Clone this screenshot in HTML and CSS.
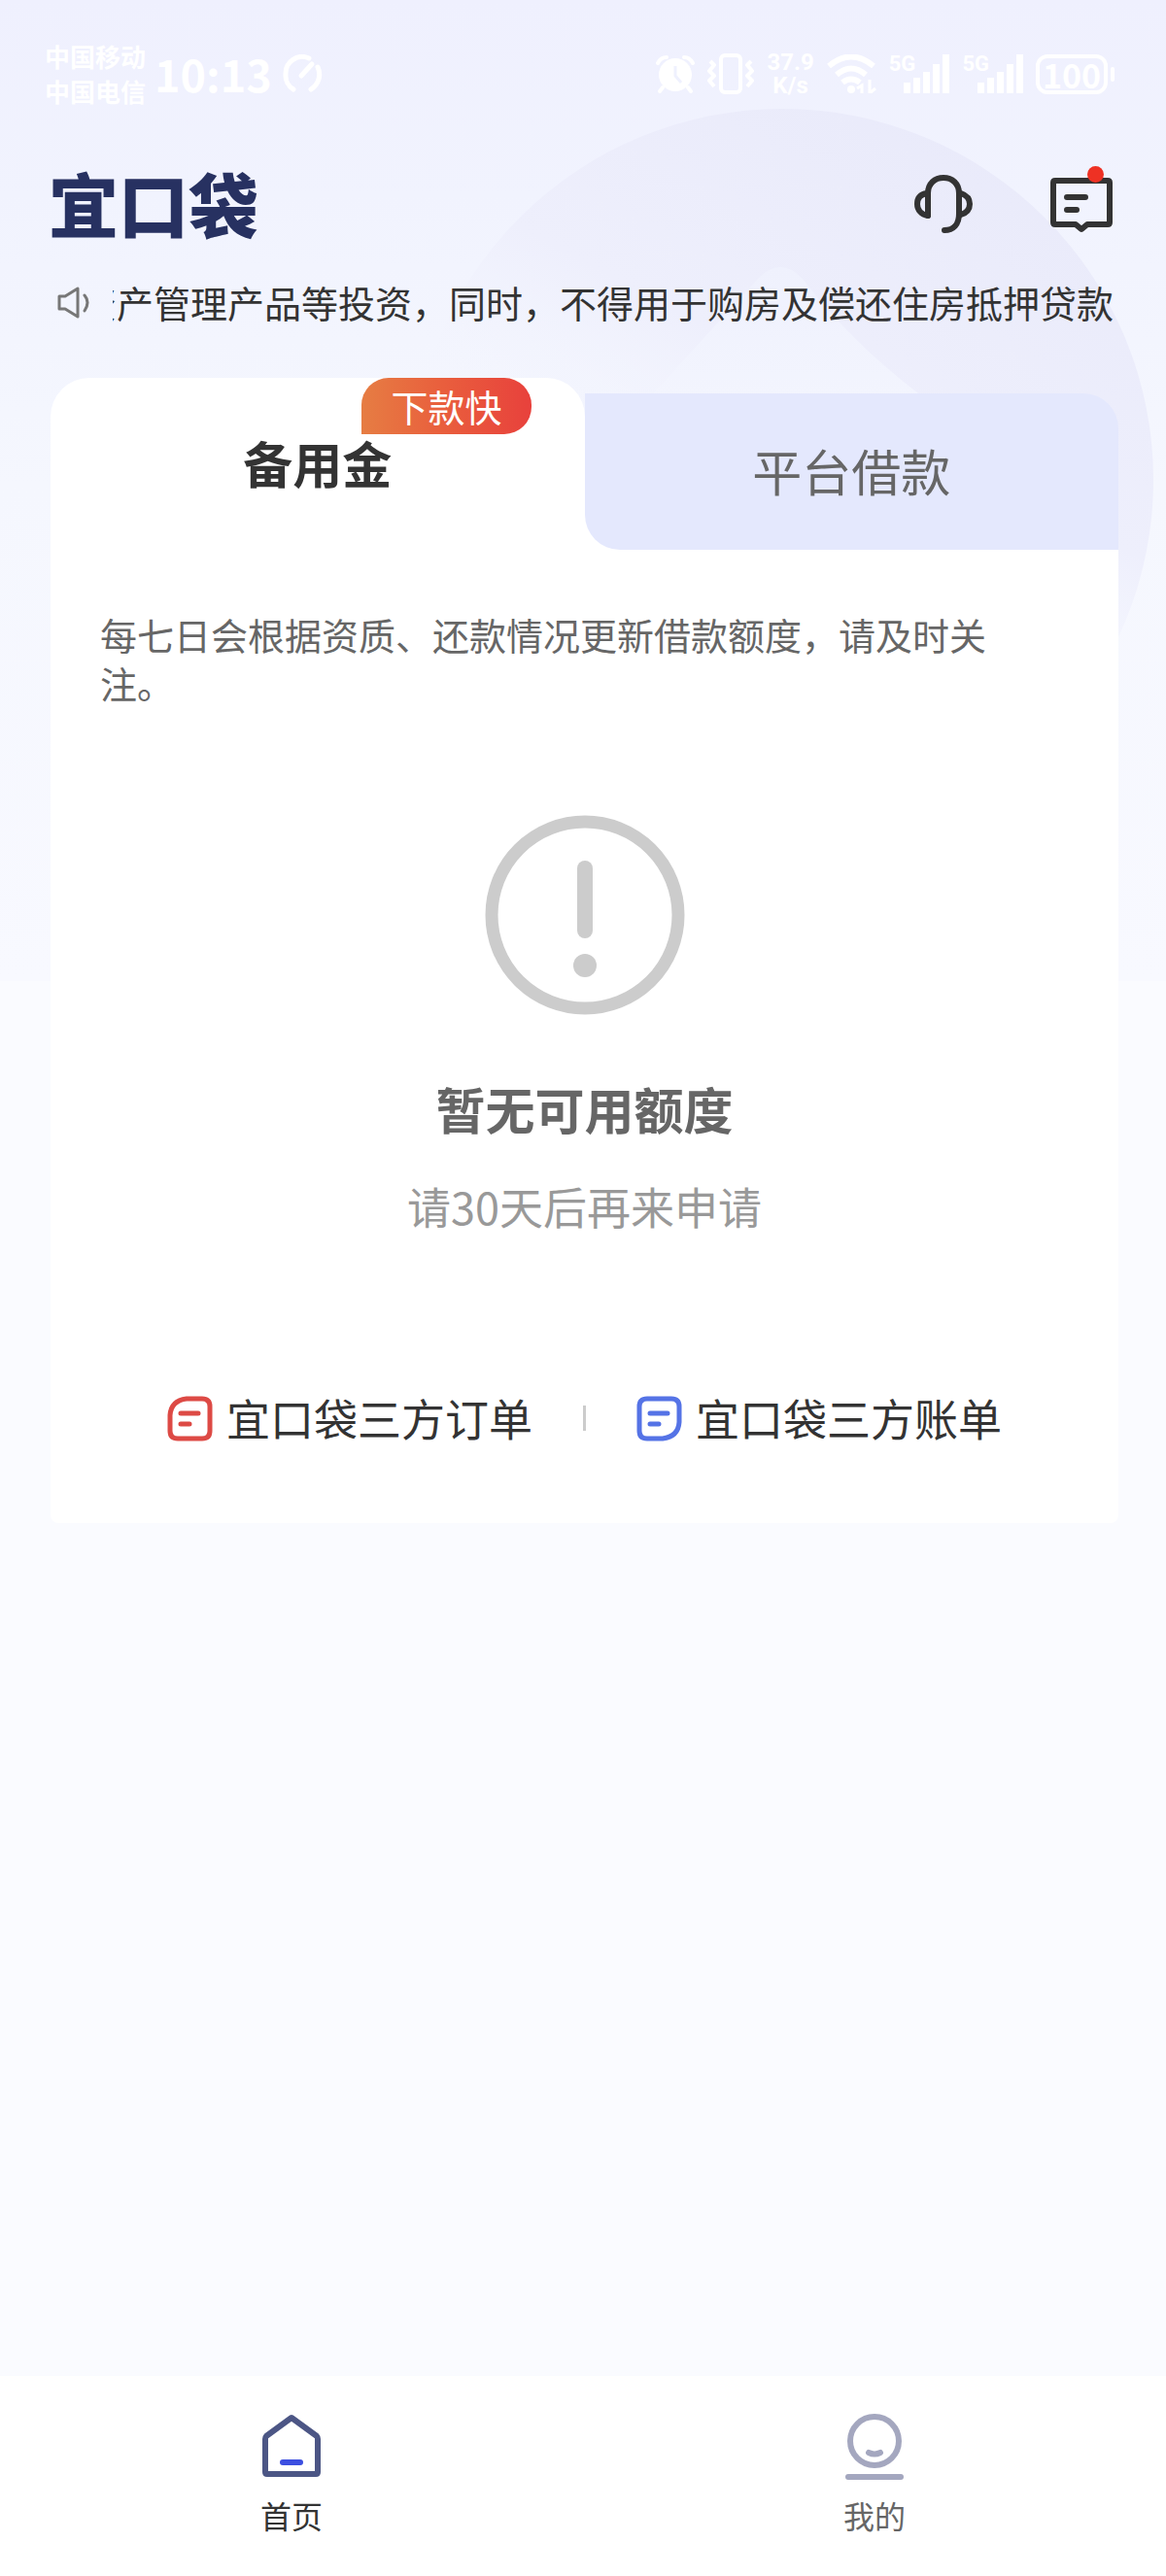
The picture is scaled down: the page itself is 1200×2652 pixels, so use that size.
FILE: index.html
```html
<!DOCTYPE html>
<html lang="zh-CN">
<head>
<meta charset="utf-8">
<meta name="viewport" content="width=device-width, initial-scale=1">
<title>宜口袋</title>
<link rel="stylesheet" href="styles.css">
</head>
<body>

<svg class="backdrop" viewBox="0 0 780 780" aria-hidden="true">
  <defs>
    <linearGradient id="disc" x1="0.75" y1="0" x2="0.35" y2="0.75">
      <stop offset="0" stop-color="#e9eafa"/>
      <stop offset="0.5" stop-color="#eeeffc"/>
      <stop offset="0.8" stop-color="#f4f6fe" stop-opacity="0"/>
    </linearGradient>
    <linearGradient id="peak" x1="0" y1="0" x2="0" y2="1">
      <stop offset="0" stop-color="#eff1fd"/>
      <stop offset="1" stop-color="#f3f5fe"/>
    </linearGradient>
  </defs>
  <circle cx="390" cy="390" r="382" fill="url(#disc)"/>
  <path d="M240 320L366 182Q388 160 410 182Q470 260 556 320z" fill="url(#peak)"/>
</svg>

<div class="statusbar">
  <div class="carriers"><span>中国移动</span><span>中国电信</span></div>
  <span class="clock">10:13</span>
  <svg class="gauge" width="42" height="40" viewBox="0 0 42 40" fill="none" stroke="#fff" stroke-width="5" stroke-linecap="round">
    <path d="M12 36A17 17 0 0 1 4 20A17 17 0 0 1 28 4"/>
    <path d="M37 13A18 18 0 0 1 30 36"/>
    <path d="M20 22L31 10"/>
  </svg>
  <div class="status-right">
    <svg width="40" height="40" viewBox="0 0 40 40">
      <circle cx="20" cy="21" r="17" fill="#fff"/>
      <path d="M2 9Q5 3 11 3M29 3Q35 3 38 9M7 34L4 38M33 34L36 38" stroke="#fff" stroke-width="4" stroke-linecap="round" fill="none"/>
      <path d="M20 12V22L26 29" stroke="#eff1fe" stroke-width="3" fill="none"/>
    </svg>
    <svg width="48" height="42" viewBox="0 0 48 42" fill="none" stroke="#fff" stroke-width="4" stroke-linejoin="round">
      <rect x="14" y="2" width="20" height="38" rx="4"/>
      <path d="M3 8L7 12L2 18L7 23L2 28L7 34M45 8L41 12L46 18L41 23L46 28L41 34"/>
    </svg>
    <div class="netspeed"><span>37.9</span><span>K/s</span></div>
    <svg width="51" height="40" viewBox="0 0 51 40" fill="none" stroke="#fff" stroke-width="6">
      <path d="M2 12Q25 -7 48 12M10 21Q25 8 40 21M16 29Q25 22 34 29"/>
      <circle cx="25" cy="36" r="4" fill="#fff" stroke="none"/>
      <path d="M36 40V32L31 35M44 26V40L50 35" stroke-width="3"/>
    </svg>
    <div class="signal">
      <span>5G</span>
      <svg width="47" height="40" viewBox="0 0 47 40" fill="#fff">
        <rect y="29" width="7" height="11"/><rect x="10" y="24" width="7" height="16"/><rect x="20" y="18" width="7" height="22"/><rect x="30" y="10" width="7" height="30"/><rect x="40" width="7" height="40"/>
      </svg>
    </div>
    <div class="signal">
      <span>5G</span>
      <svg width="47" height="40" viewBox="0 0 47 40" fill="#fff">
        <rect y="29" width="7" height="11"/><rect x="10" y="24" width="7" height="16"/><rect x="20" y="18" width="7" height="22"/><rect x="30" y="10" width="7" height="30"/><rect x="40" width="7" height="40"/>
      </svg>
    </div>
    <div class="battery">100</div>
  </div>
</div>

<header class="header">
  <h1 class="logo">宜口袋</h1>
  <div class="actions">
    <button type="button" class="icon-btn" aria-label="客服">
      <svg width="62" height="62" viewBox="0 0 62 62" fill="none" stroke="#333" stroke-width="6" stroke-linecap="round" stroke-linejoin="round">
        <path d="M15 43V20C15 10 22 4 31 4S47 10 47 20V41C47 52 41 58 32 58"/>
        <path d="M14 20C7 21 4 25 4 31S8 42 15 43"/>
        <path d="M49 20C55 22 58 26 58 31S55 40 49 42"/>
      </svg>
    </button>
    <button type="button" class="icon-btn" aria-label="消息">
      <svg width="66" height="62" viewBox="0 0 66 62" fill="none" stroke="#333" stroke-width="6" stroke-linecap="round" stroke-linejoin="round">
        <path d="M6 7H60Q62 7 62 9V50Q62 52 60 52H39L33 57L27 52H6Q4 52 4 50V9Q4 7 6 7z"/>
        <path d="M18 24H37M18 37H28"/>
      </svg>
      <span class="dot"></span>
    </button>
  </div>
</header>

<div class="notice">
  <svg width="36" height="36" viewBox="0 0 36 36" fill="none" stroke="#777" stroke-width="3" stroke-linecap="round" stroke-linejoin="round">
    <path d="M3 12H9L22 4V33L9 25H3z"/>
    <path d="M29 11Q35 18 29 27"/>
  </svg>
  <p class="notice-text">资产管理产品等投资，同时，不得用于购房及偿还住房抵押贷款</p>
</div>

<main class="card">
  <div class="tabs" role="tablist">
    <button type="button" class="tab active" role="tab" aria-selected="true">备用金<span class="badge">下款快</span></button>
    <div class="tab-slot">
      <button type="button" class="tab" role="tab" aria-selected="false">平台借款</button>
    </div>
  </div>
  <div class="panel" role="tabpanel">
    <p class="tip">每七日会根据资质、还款情况更新借款额度，请及时关注。</p>
    <svg class="warn" width="206" height="206" viewBox="0 0 206 206" aria-hidden="true">
      <circle cx="103" cy="103" r="96" fill="none" stroke="#ccc" stroke-width="13"/>
      <rect x="95" y="47" width="16" height="80" rx="8" fill="#ccc"/>
      <circle cx="103" cy="155" r="12" fill="#ccc"/>
    </svg>
    <h2 class="title">暂无可用额度</h2>
    <p class="sub">请30天后再来申请</p>
    <div class="links">
      <a href="#order">
        <svg width="47" height="47" viewBox="0 0 47 47" fill="none" stroke="#dd4a45" stroke-width="5" stroke-linecap="round">
          <path d="M20 3H36Q44 3 44 11V36Q44 44 36 44H11Q3 44 3 36V20Q4 5 20 3z"/>
          <path d="M14 18H32M14 29H23"/>
        </svg>
        宜口袋三方订单
      </a>
      <span class="divider"></span>
      <a href="#bill">
        <svg width="47" height="47" viewBox="0 0 47 47" fill="none" stroke="#5573e6" stroke-width="5" stroke-linecap="round">
          <path d="M11 3H36Q44 3 44 11V27Q43 42 27 44H11Q3 44 3 36V11Q3 3 11 3z"/>
          <path d="M14 18H32M14 29H23"/>
        </svg>
        宜口袋三方账单
      </a>
    </div>
  </div>
</main>

<nav class="tabbar">
  <a href="#home" class="current">
    <svg width="70" height="70" viewBox="0 0 70 70" fill="none" stroke="#4c5685" stroke-width="6" stroke-linejoin="round" stroke-linecap="round">
      <path d="M35 5L61 24Q62 25 62 27V61Q62 63 60 63H10Q8 63 8 61V27Q8 25 9 24z"/>
      <path d="M26 51H44" stroke="#3c4fe0"/>
    </svg>
    首页
  </a>
  <a href="#mine">
    <svg width="70" height="70" viewBox="0 0 70 70" fill="none" stroke="#a4a7bf" stroke-width="6" stroke-linecap="round">
      <circle cx="35" cy="29" r="25"/>
      <path d="M29 41Q35 44 41 41M8 66H62"/>
    </svg>
    我的
  </a>
</nav>

</body>
</html>
```
FILE: styles.css
```css
* {
	box-sizing: border-box;
	margin: 0;
	padding: 0;
}

body {
	position: relative;
	display: flex;
	flex-direction: column;
	min-height: 100vh;
	overflow-x: hidden;
	background: #fafbff linear-gradient(#eff0fe 0, #f1f3fe 200px, #f5f7fe 500px, #f8f9ff 1010px, #fafbff 1010px) no-repeat;
	font-family: "Noto Sans CJK SC", "Noto Sans", sans-serif;
	font-size: 38px;
	color: #333;
}

button {
	border: 0;
	background: none;
	font: inherit;
	color: inherit;
}

a {
	color: inherit;
	text-decoration: none;
}

svg {
	display: block;
	flex: none;
}

/* faint disc behind the header */
.backdrop {
	position: absolute;
	top: 104px;
	right: 5px;
	width: 780px;
	z-index: -1;
}

/* status bar */
.statusbar {
	display: flex;
	align-items: center;
	padding: 40px 52px 0 46px;
	color: #fff;
}

.carriers {
	display: flex;
	flex-direction: column;
	font-size: 26px;
	font-weight: bold;
	line-height: 36px;
}

.clock {
	margin-left: 9px;
	font-size: 45px;
	font-weight: bold;
	line-height: 60px;
}

.gauge {
	margin-left: 10px;
}

.status-right {
	display: flex;
	align-items: center;
	gap: 13px;
	margin-left: auto;
}

.netspeed {
	display: flex;
	flex-direction: column;
	align-items: center;
	font-family: Roboto, sans-serif;
	font-size: 24px;
	font-weight: bold;
	line-height: 24px;
}

.signal {
	display: flex;
}

.signal span {
	margin-right: -12px;
	font-family: Roboto, sans-serif;
	font-size: 22px;
	font-weight: bold;
	line-height: 20px;
}

.battery {
	position: relative;
	width: 74px;
	margin-right: 8px;
	border: 4px solid #fff;
	border-radius: 12px;
	font-size: 34px;
	font-weight: bold;
	line-height: 33px;
	text-align: center;
}

.battery::after {
	content: "";
	position: absolute;
	top: 9px;
	right: -11px;
	width: 4px;
	height: 15px;
	border-radius: 2px;
	background: #fff;
}

/* header */
.header {
	display: flex;
	justify-content: space-between;
	align-items: center;
	padding: 58px 54px 0 50px;
}

.logo {
	font-size: 72px;
	font-weight: 900;
	line-height: 76px;
	color: #273161;
}

.actions {
	display: flex;
	gap: 78px;
	padding-top: 4px;
}

.icon-btn {
	position: relative;
}

.dot {
	position: absolute;
	top: -8px;
	right: 10px;
	width: 17px;
	height: 17px;
	border-radius: 50%;
	background: #ee3124;
}

.notice {
	display: flex;
	align-items: center;
	gap: 22px;
	padding: 40px 54px 0 58px;
}

.notice-text {
	flex: 1;
	overflow: hidden;
	white-space: nowrap;
	text-indent: -34px;
	line-height: 50px;
}

/* card */
.card {
	margin: 53px 49px 0 52px;
	border-radius: 40px 40px 8px 8px;
	background: linear-gradient(#fff, #fff) 0 100% / 100% calc(100% - 177px) no-repeat;
}

.tabs {
	display: flex;
	align-items: flex-end;
}

.tab {
	position: relative;
	flex: 1;
	width: 100%;
	height: 161px;
	padding-bottom: 4px;
	border-radius: 0 36px 0 36px;
	background: #e4e8fd;
	font-size: 51px;
	color: #666;
}

.tab.active {
	height: 177px;
	border-radius: 40px 40px 0 0;
	background: #fff;
	font-weight: bold;
	color: #333;
}

.tab-slot {
	display: flex;
	flex: 1;
	background: linear-gradient(#fff, #fff) 0 100% / 40px 40px no-repeat;
}

.badge {
	position: absolute;
	top: 0;
	right: 55px;
	padding: 0 30px;
	border-radius: 28px 28px 28px 0;
	background: linear-gradient(90deg, #e67d43, #e9603d 45%, #e8413c);
	font-size: 38px;
	font-weight: normal;
	line-height: 58px;
	color: #fff;
}

.panel {
	display: flex;
	flex-direction: column;
	align-items: center;
	padding: 62px 51px 78px;
}

.tip {
	padding-right: 20px;
	line-height: 50px;
	color: #666;
}

.warn {
	margin-top: 111px;
}

.title {
	margin-top: 66px;
	font-size: 51px;
	line-height: 60px;
	color: #666;
}

.sub {
	margin-top: 41px;
	font-size: 45px;
	line-height: 60px;
	color: #999;
}

.links {
	display: flex;
	align-items: center;
	gap: 52px;
	margin-top: 158px;
	font-size: 45px;
	line-height: 60px;
}

.links a {
	display: flex;
	align-items: center;
	gap: 14px;
}

.divider {
	width: 3px;
	height: 26px;
	background: #ccc;
}

/* bottom bar */
.tabbar {
	display: flex;
	margin-top: auto;
	background: #fff;
}

.tabbar a {
	display: flex;
	flex: 1;
	flex-direction: column;
	align-items: center;
	gap: 14px;
	padding: 38px 0 42px;
	font-size: 32px;
	line-height: 42px;
	color: #666;
}

.tabbar .current {
	color: #333;
}
```
